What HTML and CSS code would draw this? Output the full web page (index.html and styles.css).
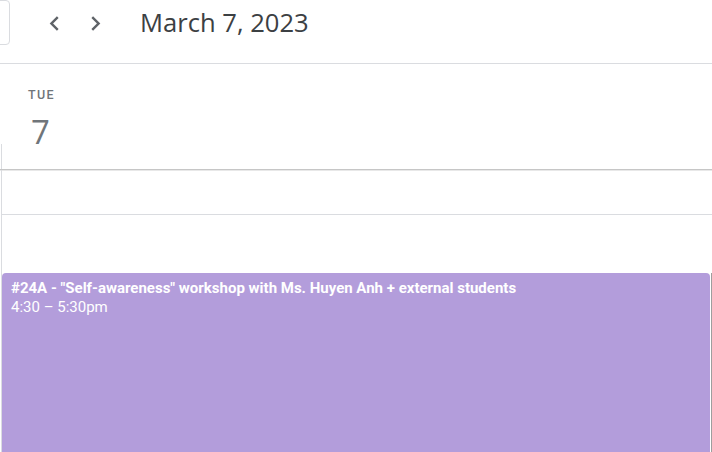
FILE: index.html
```html
<!DOCTYPE html>
<html>
<head>
<meta charset="utf-8">
<link rel="stylesheet" href="styles.css">
</head>
<body>
<div class="app">
  <header class="topbar">
    <div class="today-btn"></div>
    <div class="nav">
      <button class="nav-btn" aria-label="Previous day">
        <svg viewBox="0 0 24 24" width="29" height="29"><path d="M15.41 7.41L14 6l-6 6 6 6 1.41-1.41L10.83 12z"/></svg>
      </button>
      <button class="nav-btn" aria-label="Next day">
        <svg viewBox="0 0 24 24" width="29" height="29"><path d="M10 6L8.59 7.41 13.17 12l-4.58 4.59L10 18l6-6z"/></svg>
      </button>
    </div>
    <h1 class="title">March 7, 2023</h1>
  </header>
  <section class="dayhead">
    <div class="dayhead-labels">
      <div class="dow">TUE</div>
      <div class="dom">7</div>
    </div>
    <div class="allday"></div>
  </section>
  <section class="grid">
    <div class="row"></div>
    <div class="row tall"></div>
    <div class="event">
      <div class="event-title">#24A - "Self-awareness" workshop with Ms. Huyen Anh + external students</div>
      <div class="event-time">4:30 – 5:30pm</div>
    </div>
    <div class="edge"></div>
  </section>
</div>
</body>
</html>
```
FILE: styles.css
```css
* { box-sizing: border-box; }
html, body { margin: 0; padding: 0; background: #fff; }
body { width: 712px; height: 452px; overflow: hidden; font-family: Roboto, "Liberation Sans", sans-serif; }

.app { width: 712px; height: 452px; display: flex; flex-direction: column; }

.topbar {
  height: 64px;
  flex: none;
  display: flex;
  align-items: flex-start;
  border-bottom: 1px solid #dadce0;
}
.today-btn {
  width: 30px;
  height: 45px;
  margin-left: -20px;
  border: 1px solid #dadce0;
  border-radius: 4px;
}
.nav { display: flex; gap: 11.5px; margin-left: 30px; margin-top: 8.5px; }
.nav-btn {
  width: 29px; height: 29px; padding: 0; border: 0; background: none;
  display: flex; align-items: center; justify-content: center;
}
.nav-btn svg { fill: #5f6368; display: block; }
.title {
  margin: 5px 0 0 30.5px;
  font-family: "Open Sans", sans-serif;
  font-weight: 400;
  font-size: 25.6px;
  line-height: 36px;
  color: #3c4043;
  letter-spacing: 0;
}

.dayhead { flex: none; display: flex; flex-direction: column; border-bottom: 1px solid #c6c6c6; box-shadow: 0 1px 0 #e8e8e8; }
.dayhead-labels { height: 80px; padding: 22px 0 0 28px; }
.dow { font-size: 12.5px; font-weight: 500; letter-spacing: 1.4px; color: #70757a; line-height: 17px; }
.dom { font-family: "Open Sans", sans-serif; font-size: 33px; line-height: 40px; color: #70757a; margin: 9px 0 0 3px; }
.allday { height: 25px; margin-left: 1px; border-left: 1px solid #dadce0; }

.grid { flex: 1; position: relative; margin-left: 1px; border-left: 1px solid #dadce0; }
.row { height: 45px; border-bottom: 1px solid #dadce0; }
.row.tall { height: 200px; border-bottom: 0; }

.event {
  position: absolute;
  left: 0; right: 2px; top: 103px; bottom: -10px;
  background: #b39ddb;
  border-radius: 4px;
  padding: 6px 9px;
  color: #fff;
  font-size: 15px;
  line-height: 19px;
}
.event-title { font-weight: 700; }
.event-time { font-weight: 400; }
.edge { position: absolute; right: 0; top: 103px; bottom: 0; width: 1px; background: #9e9e9e; }
```
